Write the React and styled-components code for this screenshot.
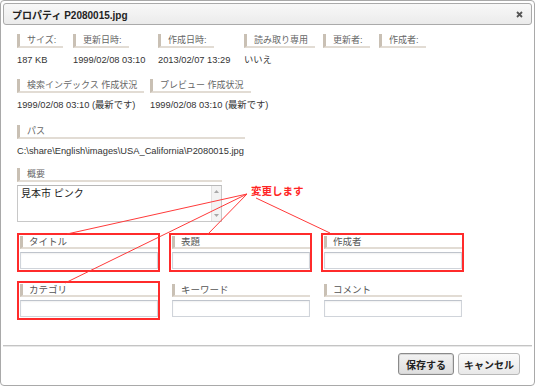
import React from "react";
import styled, { createGlobalStyle } from "styled-components";

const GlobalStyle = createGlobalStyle`
  html, body {
    margin: 0;
    padding: 0;
    background: #fff;
  }
  body {
    font-family: "Liberation Sans", "Noto Sans CJK JP", sans-serif;
  }
`;

const Dialog = styled.div`
  position: relative;
  box-sizing: border-box;
  width: 535px;
  height: 386px;
  border: 1px solid #a9a9a9;
  border-radius: 4px;
  padding: 2px;
  display: flex;
  flex-direction: column;
  background: #fff;
`;

const TitleBar = styled.div`
  display: flex;
  align-items: center;
  justify-content: space-between;
  box-sizing: border-box;
  height: 22px;
  padding: 0 8px;
  border: 1px solid #aaa;
  border-radius: 3px;
  background: linear-gradient(#f8f8f8, #ebebeb);
`;

const Title = styled.span`
  font-size: 10px;
  font-weight: bold;
  color: #222;
`;

const Close = styled.svg`
  width: 7px;
  height: 7px;
`;

const Body = styled.div`
  flex: 1;
  padding: 9px 0 0 14px;
`;

const InfoRow = styled.div`
  display: grid;
  grid-template-columns: ${(p) => p.$cols};
  margin-bottom: ${(p) => p.$gap}px;
`;

const InfoCol = styled.div`
  display: flex;
  flex-direction: column;
  align-items: flex-start;
  width: ${(p) => (p.$width ? `${p.$width}px` : "auto")};
  margin-bottom: ${(p) => p.$gap || 0}px;
`;

const Label = styled.div`
  align-self: ${(p) => (p.$full ? "stretch" : "flex-start")};
  height: 12px;
  line-height: 12px;
  padding: 0 7px;
  border-left: 3px solid #c9c0b4;
  border-bottom: 2px solid #e2dcd4;
  font-size: 9px;
  color: #666;
  white-space: nowrap;
`;

const Value = styled.div`
  margin-top: 6px;
  line-height: 12px;
  font-size: 9.3px;
  color: #333;
  white-space: nowrap;
`;

const Memo = styled.div`
  display: flex;
  box-sizing: border-box;
  width: 205px;
  height: 37px;
  margin-top: 3px;
  border: 1px solid #c8c8c8;
  border-top-color: #b8b8b8;
  margin-bottom: 11px;
`;

const MemoText = styled.div`
  flex: 1;
  padding: 1px 3px;
  font-size: 10px;
  line-height: 13px;
  color: #222;
`;

const ScrollTrack = styled.div`
  width: 9px;
  display: flex;
  flex-direction: column;
  justify-content: space-between;
  align-items: center;
  padding: 4px 0;
  background: #f3f3f3;
  border-left: 1px solid #e2e2e2;
`;

const Arrow = styled.svg`
  width: 5px;
  height: 3px;
`;

const FieldGrid = styled.div`
  display: grid;
  grid-template-columns: repeat(3, 143px);
  column-gap: 9px;
  row-gap: 9px;
`;

const FieldBox = styled.div`
  box-sizing: border-box;
  height: 39px;
  padding: 1px 0 2px 1px;
  border: 2px solid ${(p) => (p.$marked ? "#ff2b2b" : "transparent")};
`;

const FieldLabel = styled.div`
  height: 11px;
  line-height: 11px;
  padding-left: 6px;
  border-left: 3px solid #c9c0b4;
  border-bottom: 2px solid #e2dcd4;
  font-size: 9.5px;
  color: #555;
`;

const Input = styled.input`
  display: block;
  box-sizing: border-box;
  width: 100%;
  height: 17px;
  margin: 3px 0 0;
  border: 1px solid #d0d4da;
  border-top-color: #bfc4cc;
  box-shadow: inset 0 1px 2px rgba(0, 0, 0, 0.06);
  background: #fff;
`;

const Footer = styled.div`
  display: flex;
  justify-content: flex-end;
  gap: 4px;
  height: 38px;
  box-sizing: border-box;
  padding: 7px 12px 0 0;
  border-top: 1px solid #c4c4c4;
  box-shadow: inset 0 1px 0 #e8e8e8;
`;

const Button = styled.button`
  box-sizing: border-box;
  width: ${(p) => p.$width}px;
  height: 22px;
  padding: 0;
  border: 1px solid ${(p) => (p.$primary ? "#8a8a8a" : "#b8b8b8")};
  border-radius: 3px;
  box-shadow: ${(p) => (p.$primary ? "inset 0 0 0 1px #d6d6d6" : "none")};
  background: ${(p) =>
    p.$primary
      ? "linear-gradient(#f2f2f2, #dedede)"
      : "linear-gradient(#fbfbfb, #e8e8e8)"};
  font-family: "Noto Sans CJK JP", sans-serif;
  font-size: 10px;
  font-weight: bold;
  color: #222;
`;

const Overlay = styled.svg`
  position: absolute;
  left: 0;
  top: 0;
  width: 535px;
  height: 386px;
  pointer-events: none;
`;

const Callout = styled.span`
  position: absolute;
  left: 250px;
  top: 182px;
  font-family: "Noto Sans CJK JP", sans-serif;
  font-size: 10.5px;
  font-weight: bold;
  color: #ff2424;
`;

const fields = [
  { label: "タイトル", marked: true },
  { label: "表題", marked: true },
  { label: "作成者", marked: true },
  { label: "カテゴリ", marked: true },
  { label: "キーワード" },
  { label: "コメント" },
];

export default function App() {
  return (
    <>
      <GlobalStyle />
      <Dialog>
        <TitleBar>
          <Title>プロパティ P2080015.jpg</Title>
          <Close viewBox="0 0 7 7">
            <path d="M1 1 L6 6 M6 1 L1 6" stroke="#555" strokeWidth="1.8" />
          </Close>
        </TitleBar>

        <Body>
          <InfoRow $cols="56px 85px 86px 79px 56px auto" $gap={13}>
            <InfoCol>
              <Label>サイズ:</Label>
              <Value>187 KB</Value>
            </InfoCol>
            <InfoCol>
              <Label>更新日時:</Label>
              <Value>1999/02/08 03:10</Value>
            </InfoCol>
            <InfoCol>
              <Label>作成日時:</Label>
              <Value>2013/02/07 13:29</Value>
            </InfoCol>
            <InfoCol>
              <Label>読み取り専用</Label>
              <Value>いいえ</Value>
            </InfoCol>
            <InfoCol>
              <Label>更新者:</Label>
              <Value>&nbsp;</Value>
            </InfoCol>
            <InfoCol>
              <Label>作成者:</Label>
              <Value>&nbsp;</Value>
            </InfoCol>
          </InfoRow>

          <InfoRow $cols="133px auto" $gap={14}>
            <InfoCol>
              <Label>検索インデックス 作成状況</Label>
              <Value>1999/02/08 03:10 (最新です)</Value>
            </InfoCol>
            <InfoCol>
              <Label>プレビュー 作成状況</Label>
              <Value>1999/02/08 03:10 (最新です)</Value>
            </InfoCol>
          </InfoRow>

          <InfoCol $width={228} $gap={11}>
            <Label $full>パス</Label>
            <Value>C:\share\English\images\USA_California\P2080015.jpg</Value>
          </InfoCol>

          <InfoCol $width={205}>
            <Label $full>概要</Label>
            <Memo>
              <MemoText>見本市 ピンク</MemoText>
              <ScrollTrack>
                <Arrow viewBox="0 0 5 3">
                  <path d="M0 3 L2.5 0 L5 3 Z" fill="#a8a8a8" />
                </Arrow>
                <Arrow viewBox="0 0 5 3">
                  <path d="M0 0 L2.5 3 L5 0 Z" fill="#a8a8a8" />
                </Arrow>
              </ScrollTrack>
            </Memo>
          </InfoCol>

          <FieldGrid>
            {fields.map((f) => (
              <FieldBox key={f.label} $marked={f.marked}>
                <FieldLabel>{f.label}</FieldLabel>
                <Input type="text" />
              </FieldBox>
            ))}
          </FieldGrid>
        </Body>

        <Footer>
          <Button $primary $width={56}>保存する</Button>
          <Button $width={62}>キャンセル</Button>
        </Footer>

        <Overlay viewBox="0 0 535 386">
          <g stroke="#ff3a3a" strokeWidth="1" fill="none">
            <line x1="246" y1="193" x2="66" y2="233" />
            <line x1="246" y1="193" x2="64" y2="282" />
            <line x1="246" y1="193" x2="206" y2="234" />
            <line x1="255" y1="197" x2="329" y2="232" />
          </g>
        </Overlay>
        <Callout>変更します</Callout>
      </Dialog>
    </>
  );
}
